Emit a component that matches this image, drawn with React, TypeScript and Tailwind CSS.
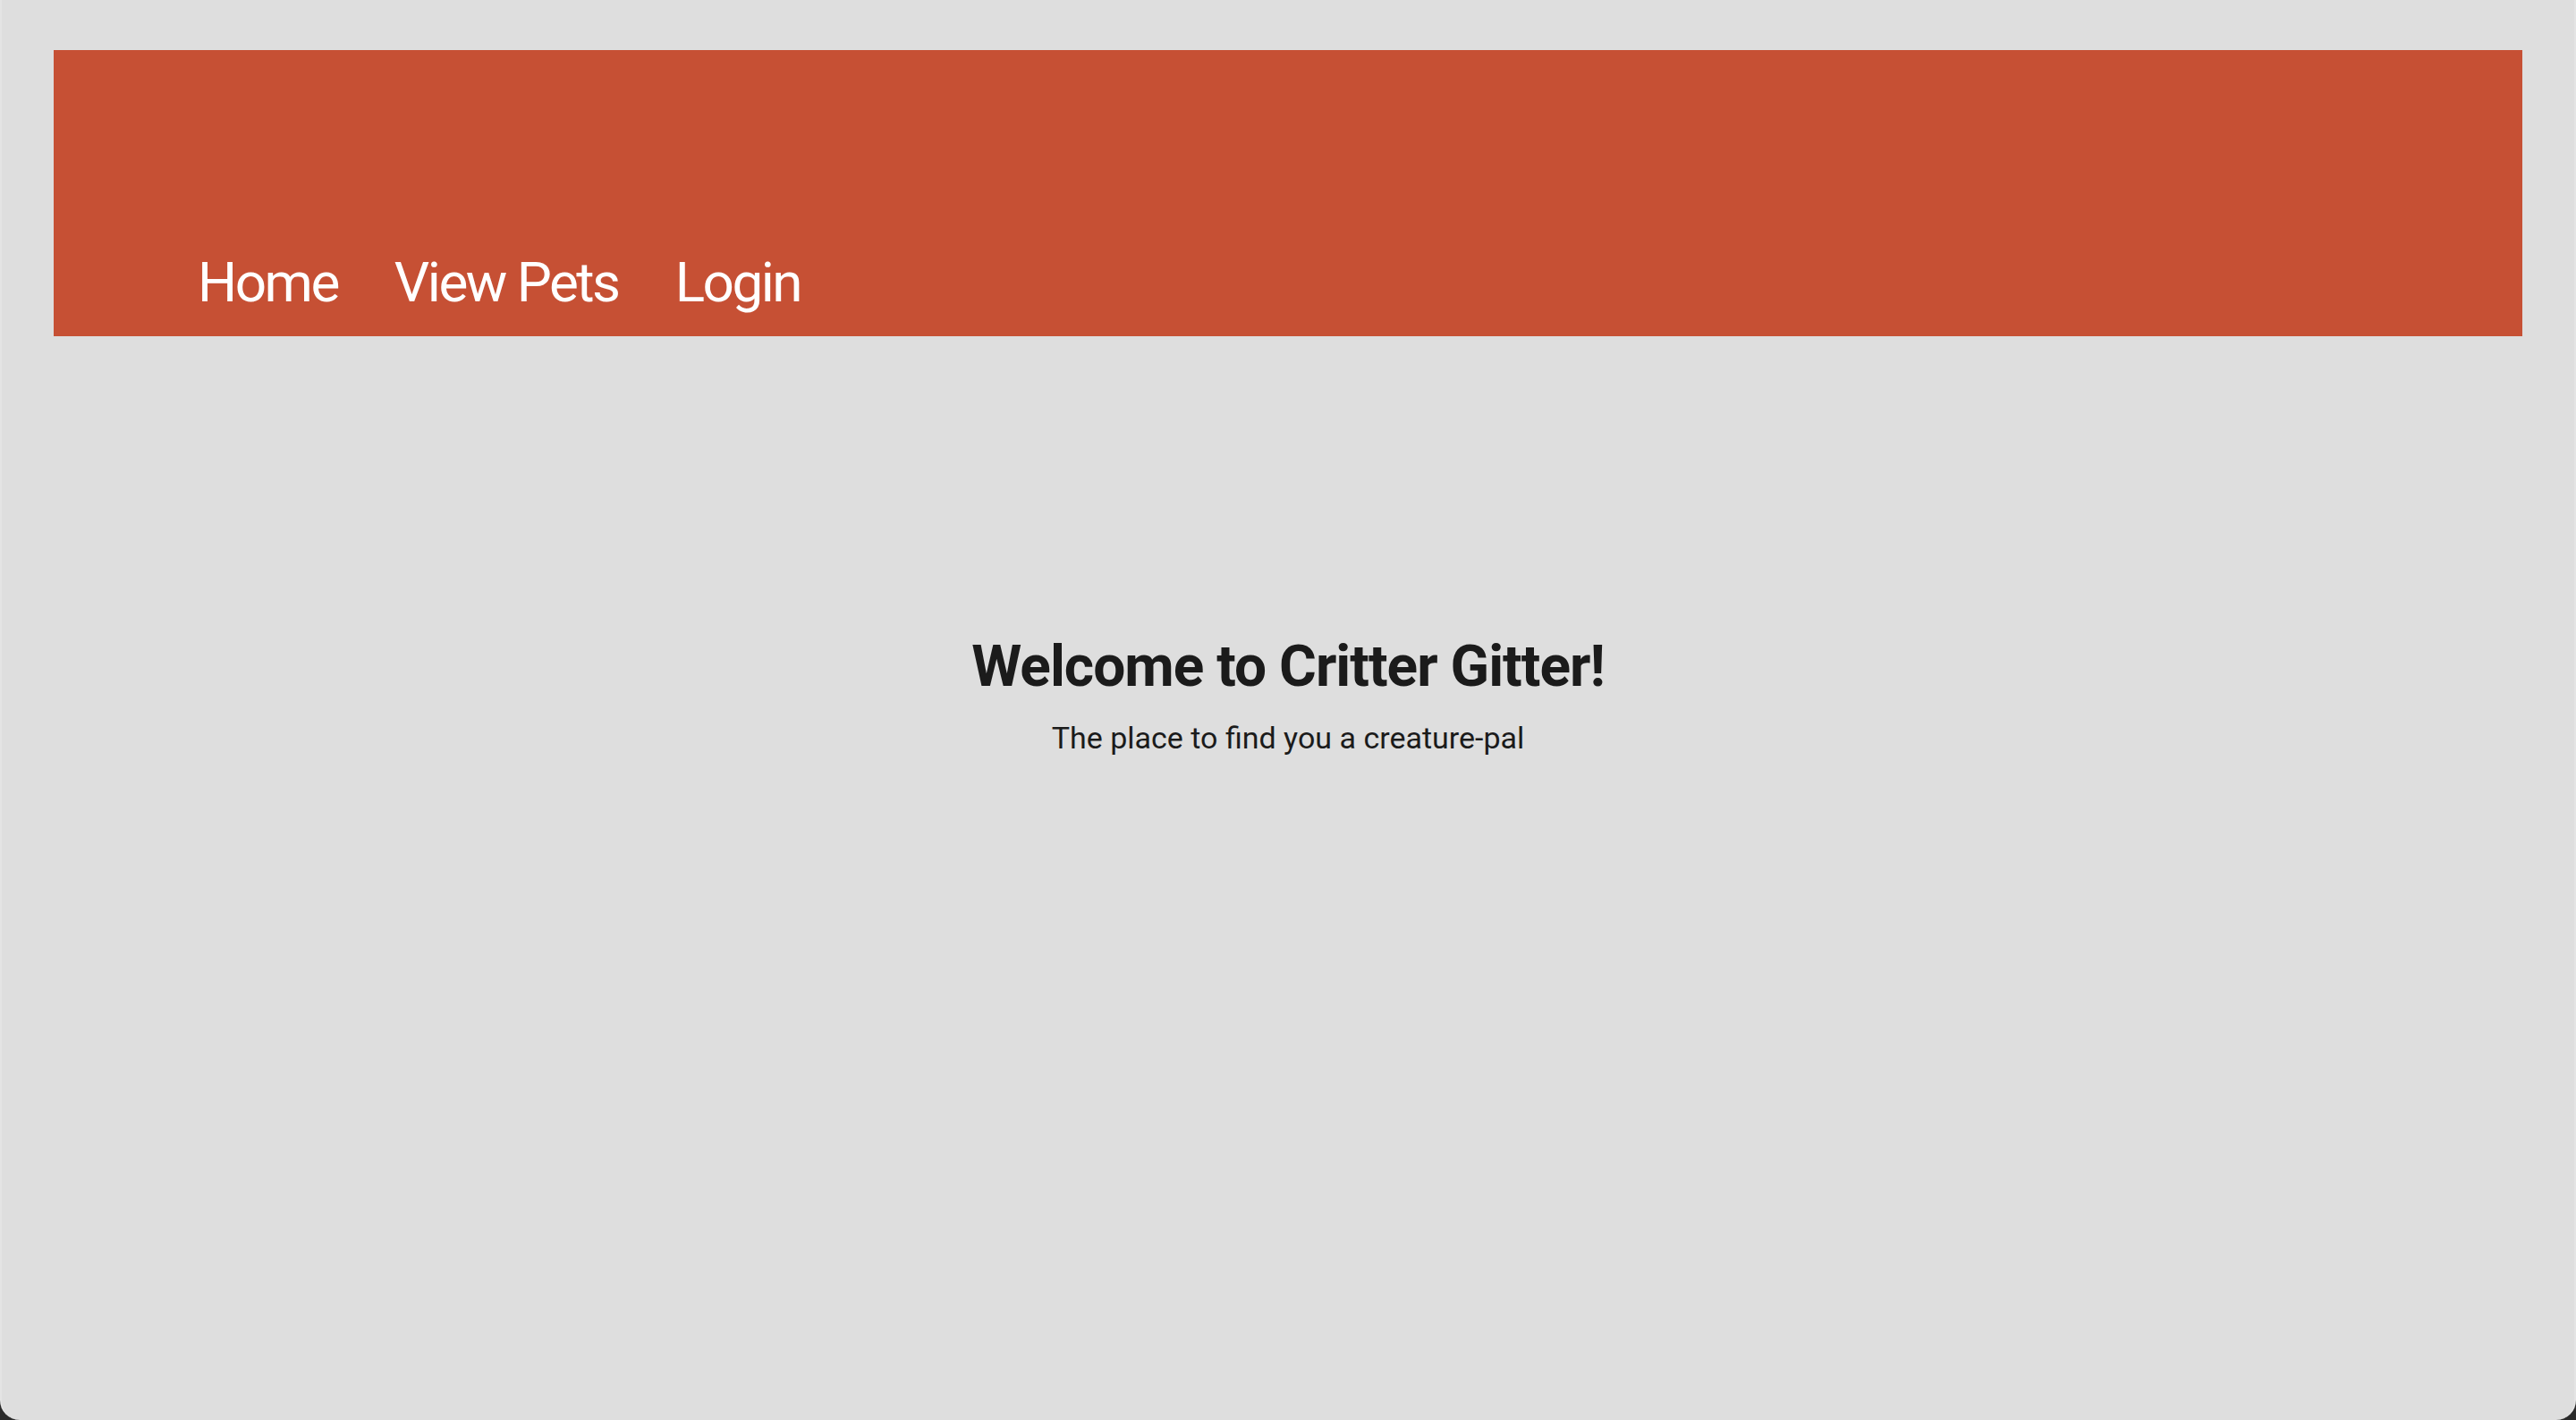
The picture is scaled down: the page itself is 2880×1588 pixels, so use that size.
import React from "react";

const links = ["Home", "View Pets", "Login"];

export default function App() {
  return (
    <div className="h-[1588px] bg-[#2b2b2b]">
      <div
        className="h-full rounded-b-[22px] bg-[#dedede] border-x-2 border-[#e4e4e4] overflow-hidden"
        style={{ fontFamily: "Roboto, 'Liberation Sans', sans-serif" }}
      >
        {/* Top nav bar */}
        <header className="mt-[56px] mx-[58px] h-[320px] bg-[#c65034] flex items-end pb-[29px] pl-[161px]">
          <nav className="flex gap-[63px]">
            {links.map((l) => (
              <a key={l} href="#" className="text-white text-[62px] leading-none tracking-[-2.5px]">
                {l}
              </a>
            ))}
          </nav>
        </header>

        {/* Welcome */}
        <main className="flex flex-col items-center pt-[338px] text-[#1b1b1b]">
          <h1 className="text-[64px] leading-none font-bold tracking-[-1px]">Welcome to Critter Gitter!</h1>
          <p className="mt-[30px] text-[34px] leading-none">The place to find you a creature-pal</p>
        </main>
      </div>
    </div>
  );
}
